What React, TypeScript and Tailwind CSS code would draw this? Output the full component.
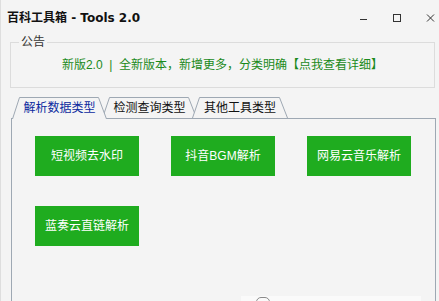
const font = "font-['Liberation_Sans','Noto_Sans_CJK_SC',sans-serif]";

function Tab({
  label,
  active = false,
  width,
  className = '',
}: {
  label: string;
  active?: boolean;
  width: number;
  className?: string;
}) {
  // inactive tabs stop one pixel short so the panel's top line shows under them
  const bottom = active ? 22 : 21;
  const pts = `0.5,${bottom} 7.5,0.5 ${width - 8.5},0.5 ${width - 0.5},${bottom}`;
  return (
    <div className={`relative flex h-[22px] items-center justify-center ${className}`} style={{ width }}>
      <svg className="absolute inset-0 h-full w-full" viewBox={`0 0 ${width} 22`} fill="none" aria-hidden="true">
        <polygon points={pts} fill="#f4f4f4" />
        <polyline points={pts} stroke="#9ea8b3" strokeWidth="1" />
      </svg>
      <span className={`relative text-[12px] leading-none ${active ? 'text-[#0b2a9e]' : 'text-[#111]'}`}>{label}</span>
    </div>
  );
}

function ToolButton({ label }: { label: string }) {
  return (
    <button className="flex h-[40px] w-[104px] items-center justify-center bg-[#1fac1f] text-[12px] text-white">
      {label}
    </button>
  );
}

export default function App() {
  return (
    <div className={`relative h-[301px] w-[439px] overflow-hidden border-l border-[#dedede] bg-[#f4f4f4] ${font}`}>
      <div className="flex h-[36px] items-center justify-between pl-[6px] pr-[4px]">
        <h1 className="font-['DejaVu_Sans','Noto_Sans_CJK_SC',sans-serif] text-[12px] font-bold text-[#111]">
          百科工具箱 - Tools 2.0
        </h1>
        <div className="flex items-center text-[#333]">
          <svg className="h-[10px] w-[34px]" viewBox="0 0 34 10" aria-hidden="true">
            <line x1="13" y1="6.5" x2="20" y2="6.5" stroke="currentColor" />
          </svg>
          <svg className="h-[10px] w-[34px]" viewBox="0 0 34 10" aria-hidden="true">
            <rect x="12.5" y="1.5" width="7" height="7" fill="none" stroke="currentColor" />
          </svg>
          <svg className="h-[10px] w-[20px]" viewBox="0 0 20 10" aria-hidden="true">
            <path d="M12 1.5l7 7M19 1.5l-7 7" stroke="currentColor" />
          </svg>
        </div>
      </div>

      <div className="relative ml-[9px] mt-[6px] flex h-[46px] w-[425px] items-center justify-center border border-[#dcdcdc]">
        <span className="absolute left-[8px] top-[-8px] bg-[#f4f4f4] px-[2px] text-[12px] leading-[14px] text-[#333]">
          公告
        </span>
        <p className="whitespace-pre text-[12px] text-[#1b8a1b]">新版2.0  |  全新版本，新增更多，分类明确【点我查看详细】</p>
      </div>

      <div className="ml-[10px] mt-[9px]">
        <div className="relative z-10 -mb-px flex pl-px">
          <Tab label="解析数据类型" active width={95} className="z-30" />
          <Tab label="检测查询类型" width={95} className="z-10 -ml-[5px]" />
          <Tab label="其他工具类型" width={96} className="z-20 -ml-[5px]" />
        </div>
        <div className="h-[200px] w-[425px] border-x border-t border-[#9ea8b3] pl-[23px] pt-[17px]">
          <div className="grid grid-cols-[104px_104px_104px] gap-x-[32px] gap-y-[30px]">
            <ToolButton label="短视频去水印" />
            <ToolButton label="抖音BGM解析" />
            <ToolButton label="网易云音乐解析" />
            <ToolButton label="蓝奏云直链解析" />
          </div>
        </div>
      </div>

      <div className="absolute bottom-0 left-[240px] h-[5px] w-[180px] bg-[#fafafa]">
        <div className="ml-[15px] mt-[1px] h-[10px] w-[14px] rounded-full border border-[#8a8a8a]" />
      </div>
    </div>
  );
}
